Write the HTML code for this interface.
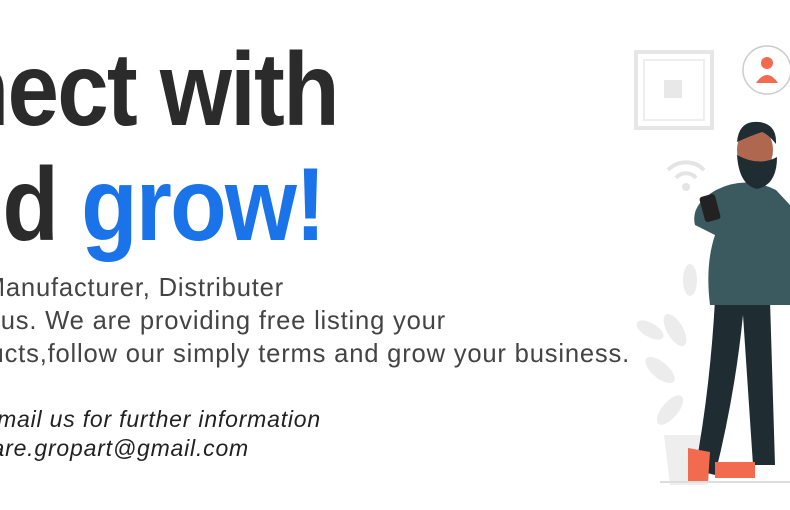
<!DOCTYPE html>
<html><head><meta charset="utf-8"><style>
html,body{margin:0;padding:0;background:#fff;}
#c{position:relative;width:790px;height:510px;overflow:hidden;background:#fff;font-family:"Liberation Sans",sans-serif;}
.l{position:absolute;white-space:nowrap;text-align:right;}
.h{font-size:104px;font-weight:bold;color:#2b2b2b;letter-spacing:-2px;line-height:1;transform:scaleX(0.89);transform-origin:right center;}
.b{font-size:25.6px;color:#444;line-height:1;letter-spacing:0.8px;}
.i{font-size:23px;color:#222;font-style:italic;line-height:1;letter-spacing:0.8px;}
</style></head><body><div id="c">
<div class="l h" style="right:452px;top:38px;">Connect with</div>
<div class="l h" style="right:466px;top:153px;">us and <span style="color:#1a73e8">grow!</span></div>
<div class="l b" style="right:506px;top:276px;">Manufacturer, Distributer</div>
<div class="l b" style="right:344px;top:309px;">us. We are providing free listing your</div>
<div class="l b" style="right:160px;top:342px;">products,follow our simply terms and grow your business.</div>
<div class="l i" style="right:469px;top:408px;">Email us for further information</div>
<div class="l i" style="right:541px;top:437px;">care.gropart@gmail.com</div>
<svg style="position:absolute;left:620px;top:30px" width="170" height="460" viewBox="0 0 170 460">
<rect x="16" y="22" width="76" height="76" fill="none" stroke="#e6e6e6" stroke-width="4"/>
<rect x="24" y="30" width="60" height="60" fill="none" stroke="#eee" stroke-width="2"/>
<rect x="44" y="50" width="18" height="18" fill="#e8e8e8"/>
<circle cx="147" cy="40" r="24" fill="#fff" stroke="#ccc" stroke-width="1.5"/>
<circle cx="147" cy="33" r="6" fill="#f26b4f"/>
<path d="M136 53 q11-16 22 0z" fill="#f26b4f"/>
<path d="M48 140 a25 25 0 0 1 36 0" fill="none" stroke="#e4e4e4" stroke-width="4"/>
<path d="M56 148 a13 13 0 0 1 20 0" fill="none" stroke="#e4e4e4" stroke-width="4"/>
<circle cx="66" cy="157" r="4" fill="#e4e4e4"/>
<g fill="#ececec"><ellipse cx="55" cy="300" rx="8" ry="18" transform="rotate(-30 55 300)"/><ellipse cx="40" cy="340" rx="8" ry="18" transform="rotate(-50 40 340)"/><ellipse cx="50" cy="380" rx="8" ry="18" transform="rotate(40 50 380)"/><ellipse cx="30" cy="300" rx="7" ry="15" transform="rotate(-60 30 300)"/><ellipse cx="70" cy="250" rx="7" ry="16"/></g>
<path d="M44 405 h50 l-6 50 h-38z" fill="#eee"/>
<path d="M95 270 q-5 90 -20 170 l20 5 q20-80 28-160 l10 150 h22 l-5-165z" fill="#1f2d33"/>
<path d="M68 418 l22 4 l-2 30 h-20z" fill="#f26b4f"/>
<path d="M95 432 h40 v16 h-40z" fill="#f26b4f"/>
<path d="M96 160 q30-15 60 0 l14 15 v100 h-80 q-5-40 5-70 l-20-10 q-5-20 21-35z" fill="#3b5a60"/>
<rect x="82" y="165" width="16" height="26" rx="3" fill="#222" transform="rotate(-15 90 178)"/>
<ellipse cx="135" cy="120" rx="18" ry="24" fill="#b0674f"/>
<path d="M117 125 q2 30 20 34 q20-4 20-32 q-18 10-40-2z" fill="#1f2d33"/>
<path d="M117 112 q2-22 22-20 q18 2 17 22 q-8-10-14-12 q-12 4-25 10z" fill="#1f2d33"/>
<line x1="40" y1="452" x2="170" y2="452" stroke="#ddd" stroke-width="2"/>
</svg>
</div></body></html>
